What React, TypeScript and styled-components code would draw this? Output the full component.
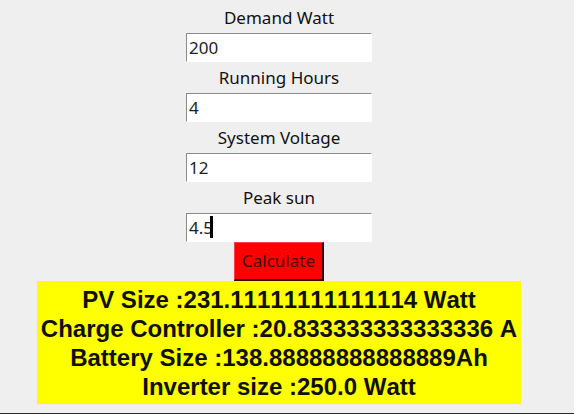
import React, { useState } from "react";
import styled, { createGlobalStyle } from "styled-components";

const GlobalStyle = createGlobalStyle`
  * { box-sizing: border-box; }
  body {
    margin: 0;
    background: #efefef;
    color: #111;
    font-family: "Noto Sans", "Open Sans", sans-serif;
    font-size: 17px;
  }
`;

const Window = styled.main`
  min-height: 100vh;
  display: flex;
  flex-direction: column;
  border-bottom: 1px solid #2b2b2b;
`;

const Form = styled.form`
  flex: 1;
  display: flex;
  flex-direction: column;
  align-items: center;
  padding: 2px 16px 8px 0;
`;

const Label = styled.label`
  height: 31px;
  line-height: 32px;
`;

const Field = styled.div`
  position: relative;
  width: 186px;
  height: 29px;
`;

const Entry = styled.input`
  display: block;
  width: 100%;
  height: 100%;
  padding: 0 2px;
  border: 1px solid #fff;
  border-top-color: #8c8c8c;
  border-left-color: #8c8c8c;
  border-radius: 0;
  outline: none;
  background: #fff;
  color: #222;
  font: inherit;
  caret-color: transparent;
`;

const Caret = styled.span`
  position: absolute;
  top: 3px;
  left: 24px;
  width: 3px;
  height: 22px;
  background: #000;
`;

const Calculate = styled.button`
  width: 90px;
  height: 39px;
  padding: 0 0 2px;
  border: 2px solid #3a0000;
  border-top: 1px solid #ff4040;
  border-left: 1px solid #ff4040;
  border-radius: 0;
  background: #f00;
  color: #4a0000;
  font: inherit;
`;

const Results = styled.output`
  display: flex;
  flex-direction: column;
  align-items: center;
  padding: 4px 4px 3px;
  background: #ff0;
  color: #111100;
  font: bold 24px/29px "Liberation Sans", Arial, sans-serif;
  font-kerning: none;
  white-space: nowrap;
`;

const fields = [
  { id: "demand", label: "Demand Watt", initial: "200" },
  { id: "hours", label: "Running Hours", initial: "4" },
  { id: "voltage", label: "System Voltage", initial: "12" },
  { id: "sun", label: "Peak sun", initial: "4.5", active: true },
];

const results = [
  "PV Size :231.11111111111114 Watt",
  "Charge Controller :20.833333333333336 A",
  "Battery Size :138.88888888888889Ah",
  "Inverter size :250.0 Watt",
];

export default function App() {
  const [values, setValues] = useState<Record<string, string>>(
    Object.fromEntries(fields.map((f) => [f.id, f.initial]))
  );

  return (
    <>
      <GlobalStyle />
      <Window>
        <Form onSubmit={(e) => e.preventDefault()}>
          {fields.map((f) => (
            <React.Fragment key={f.id}>
              <Label htmlFor={f.id}>{f.label}</Label>
              <Field>
                <Entry
                  id={f.id}
                  value={values[f.id]}
                  onChange={(e) => setValues({ ...values, [f.id]: e.target.value })}
                />
                {f.active && <Caret />}
              </Field>
            </React.Fragment>
          ))}
          <Calculate type="submit">Calculate</Calculate>
          <Results>
            {results.map((line) => (
              <span key={line}>{line}</span>
            ))}
          </Results>
        </Form>
      </Window>
    </>
  );
}
